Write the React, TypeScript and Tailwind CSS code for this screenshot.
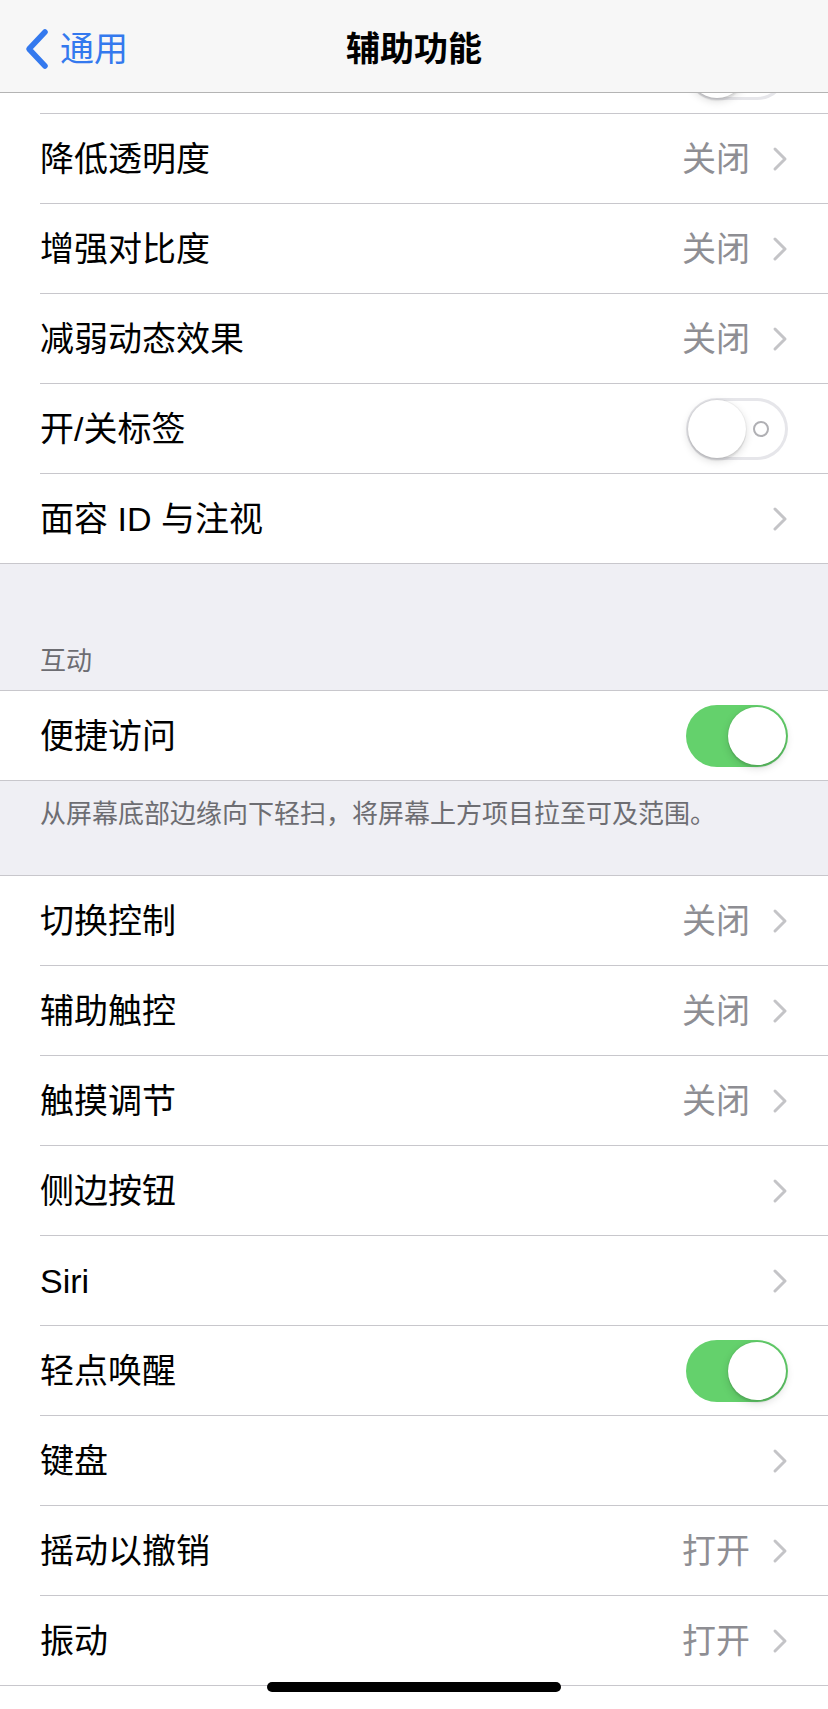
import React from 'react';

type Row = {
  label: string;
  value?: string;
  toggle?: 'on' | 'off';
  labels?: boolean;
};

// first row is scrolled under the nav bar, only its switch edge shows
const topGroup: Row[] = [
  { label: '', toggle: 'off' },
  { label: '降低透明度', value: '关闭' },
  { label: '增强对比度', value: '关闭' },
  { label: '减弱动态效果', value: '关闭' },
  { label: '开/关标签', toggle: 'off', labels: true },
  { label: '面容 ID 与注视' },
];

const reachGroup: Row[] = [{ label: '便捷访问', toggle: 'on' }];

const interactGroup: Row[] = [
  { label: '切换控制', value: '关闭' },
  { label: '辅助触控', value: '关闭' },
  { label: '触摸调节', value: '关闭' },
  { label: '侧边按钮' },
  { label: 'Siri' },
  { label: '轻点唤醒', toggle: 'on' },
  { label: '键盘' },
  { label: '摇动以撤销', value: '打开' },
  { label: '振动', value: '打开' },
];

const Chevron = () => (
  <svg width="16" height="26" viewBox="0 0 16 26" fill="none" className="ml-[22px] shrink-0">
    <path
      d="M3 3l10 10L3 23"
      stroke="#c4c4c7"
      strokeWidth="3"
      strokeLinecap="round"
      strokeLinejoin="round"
    />
  </svg>
);

const Switch = ({ on, labels }: { on: boolean; labels?: boolean }) => (
  <div
    className={
      on
        ? 'relative w-[102px] h-[62px] rounded-full bg-[#64d16c] shrink-0'
        : 'relative w-[102px] h-[62px] rounded-full bg-white shadow-[inset_0_0_0_3px_#e6e6ea] shrink-0'
    }
  >
    {labels && !on && (
      <span className="absolute right-[19px] top-1/2 -translate-y-1/2 w-[16px] h-[16px] rounded-full border-2 border-[#b0b0b4]" />
    )}
    <span
      className={
        on
          ? 'absolute top-[2px] left-[42px] w-[58px] h-[58px] rounded-full bg-white shadow-[0_3px_8px_rgba(0,0,0,0.15),0_3px_1px_rgba(0,0,0,0.06),0_0_0_1px_rgba(0,0,0,0.04)]'
          : 'absolute top-[2px] left-[2px] w-[58px] h-[58px] rounded-full bg-white shadow-[0_3px_8px_rgba(0,0,0,0.15),0_3px_1px_rgba(0,0,0,0.06),0_0_0_1px_rgba(0,0,0,0.04)]'
      }
    />
  </div>
);

const Cell = ({ row, last }: { row: Row; last: boolean }) => (
  <div className={last ? 'bg-white pl-[40px] border-b border-[#c8c7cc]' : 'bg-white pl-[40px]'}>
    <div
      className={
        last
          ? 'flex items-center h-[89px] pr-[40px]'
          : 'flex items-center h-[90px] pr-[40px] border-b border-[#c8c7cc]'
      }
    >
      <span className="flex-1 text-[34px] leading-none text-black">{row.label}</span>
      {row.toggle ? (
        <Switch on={row.toggle === 'on'} labels={row.labels} />
      ) : (
        <>
          {row.value && <span className="text-[34px] leading-none text-[#8e8e93]">{row.value}</span>}
          <Chevron />
        </>
      )}
    </div>
  </div>
);

const Group = ({ rows, top }: { rows: Row[]; top?: boolean }) => (
  <div className={top ? 'border-t border-[#c8c7cc]' : ''}>
    {rows.map((r, i) => (
      <Cell key={r.label || i} row={r} last={i === rows.length - 1} />
    ))}
  </div>
);

export default function App() {
  return (
    <div className="relative w-[828px] h-[1709px] overflow-hidden bg-[#efeff4] font-['Liberation_Sans','Noto_Sans_CJK_SC',sans-serif]">
      <div className="pt-[24px]">
        <Group rows={topGroup} />

        <div className="h-[126px] flex items-end pl-[40px] pb-[16px] text-[26px] leading-none text-[#6d6d72]">
          互动
        </div>
        <Group rows={reachGroup} top />

        <div className="h-[94px] pl-[40px] pt-[20px] text-[26px] leading-none text-[#6d6d72]">
          从屏幕底部边缘向下轻扫，将屏幕上方项目拉至可及范围。
        </div>
        <Group rows={interactGroup} top />
        {/* next row continues past the bottom edge */}
        <div className="h-[90px] bg-white" />
      </div>

      {/* navigation bar */}
      <div className="absolute inset-x-0 top-0 h-[93px] bg-[#f7f7f7] border-b border-[#b4b4b4] grid grid-cols-[1fr_auto_1fr] items-center pt-[6px]">
        <div className="flex items-center pl-[24px] gap-[10px] text-[#3479ee]">
          <svg width="26" height="42" viewBox="0 0 26 42" fill="none">
            <path
              d="M21 4L5 21l16 17"
              stroke="#3479ee"
              strokeWidth="5.5"
              strokeLinecap="round"
              strokeLinejoin="round"
            />
          </svg>
          <span className="text-[34px] leading-none">通用</span>
        </div>
        <div className="text-[34px] leading-none font-semibold text-black">辅助功能</div>
        <div />
      </div>

      {/* home indicator */}
      <div className="absolute bottom-[17px] left-1/2 -translate-x-1/2 w-[294px] h-[10px] rounded-full bg-black" />
    </div>
  );
}
